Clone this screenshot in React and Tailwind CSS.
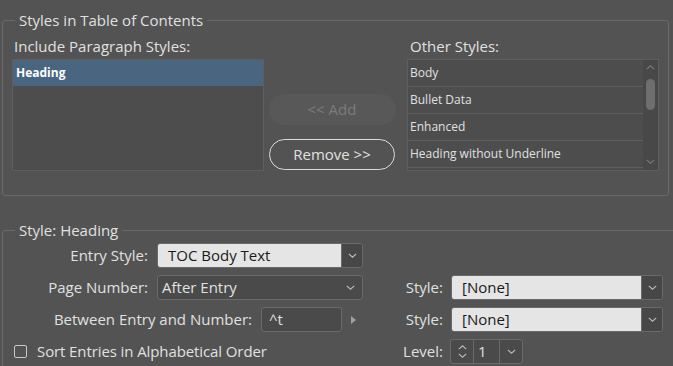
import React from "react";

const Chevron = ({ dir = "down", className = "" }) => (
  <svg width="9" height="5" viewBox="0 0 9 5" className={className}>
    {dir === "down" ? (
      <path d="M0.8 0.8 L4.5 4.2 L8.2 0.8" fill="none" stroke="currentColor" strokeWidth="1.1" />
    ) : (
      <path d="M0.8 4.2 L4.5 0.8 L8.2 4.2" fill="none" stroke="currentColor" strokeWidth="1.1" />
    )}
  </svg>
);

const LightSelect = ({ value, width }) => (
  <div className={`flex h-[25px] ${width} rounded-[3px] border border-[#6a6a6a] overflow-hidden`}>
    <div className="flex-1 bg-[#e5e5e5] text-[#1a1a1a] text-[15px] flex items-center pl-[10px]">{value}</div>
    <div className="w-[21px] bg-[#474747] border-l border-[#6a6a6a] flex items-center justify-center text-[#bdbdbd]">
      <Chevron />
    </div>
  </div>
);

const RightLabel = ({ children }) => (
  <div className="w-[51px] text-right text-[15px]">{children}</div>
);

export default function App() {
  const others = ["Body", "Bullet Data", "Enhanced", "Heading without Underline"];
  return (
    <div
      className="w-[673px] h-[366px] bg-[#535353] overflow-hidden text-[#e0e0e0] relative"
      style={{ fontFamily: '"Open Sans", "Noto Sans", sans-serif' }}
    >
      <fieldset className="ml-[2px] mt-[11px] w-[667px] h-[185px] border border-[#6a6a6a] rounded-[3px] px-[9px]">
        <legend className="ml-[3px] px-[4px] text-[15px] leading-[18px]">Styles in Table of Contents</legend>
        <div className="flex mt-[8px]">
          <div className="w-[252px] flex flex-col">
            <div className="text-[15px] leading-[18px] pl-[2px]">Include Paragraph Styles:</div>
            <div className="mt-[4px] h-[112px] border border-[#5e5e5e] bg-[#4d4d4d]">
              <div className="h-[26px] bg-[#4a6580] text-white text-[12px] font-bold flex items-center pl-[3px]">Heading</div>
            </div>
          </div>
          <div className="flex-1 flex flex-col items-center pt-[57px] pr-[7px]">
            <div className="w-[127px] h-[31px] rounded-full bg-[#585858] text-[#7c7c7c] text-[15px] flex items-center justify-center">&lt;&lt; Add</div>
            <div className="mt-[14px] w-[126px] h-[31px] rounded-full border border-[#dcdcdc] text-[15px] flex items-center justify-center">Remove &gt;&gt;</div>
          </div>
          <div className="w-[252px] flex flex-col">
            <div className="text-[15px] leading-[18px] pl-[3px]">Other Styles:</div>
            <div className="mt-[4px] h-[112px] border border-[#5e5e5e] bg-[#4d4d4d] flex">
              <div className="flex-1 flex flex-col">
                {others.map((o) => (
                  <div key={o} className="h-[27px] border-b border-[#5e5e5e] text-[12px] flex items-center pl-[2px]">{o}</div>
                ))}
              </div>
              <div className="w-[15px] bg-[#484848] flex flex-col items-center text-[#7a7a7a]">
                <Chevron dir="up" className="mt-[5px]" />
                <div className="mt-[9px] w-[9px] h-[31px] rounded-full bg-[#6e6e6e]" />
                <div className="flex-1" />
                <Chevron className="mb-[6px]" />
              </div>
            </div>
          </div>
        </div>
      </fieldset>

      <fieldset className="ml-[2px] mt-[25px] w-[700px] h-[200px] border border-[#6a6a6a] rounded-[3px] px-[9px]">
        <legend className="ml-[3px] px-[4px] text-[15px] leading-[18px]">Style: Heading</legend>
        <div className="flex flex-col mt-[4px] gap-[7px]">
          <div className="flex items-center">
            <div className="w-[136px] text-right text-[15px]">Entry Style:</div>
            <div className="ml-[9px]"><LightSelect value="TOC Body Text" width="w-[206px]" /></div>
          </div>
          <div className="flex items-center">
            <div className="w-[380px] flex items-center">
              <div className="w-[136px] text-right text-[15px]">Page Number:</div>
              <div className="ml-[9px] w-[206px] h-[25px] rounded-[3px] border border-[#6a6a6a] bg-[#4a4a4a] flex items-center pl-[4px] pr-[7px] text-[15px]">
                <span className="flex-1">After Entry</span>
                <Chevron className="text-[#bdbdbd]" />
              </div>
            </div>
            <RightLabel>Style:</RightLabel>
            <div className="ml-[8px]"><LightSelect value="[None]" width="w-[212px]" /></div>
          </div>
          <div className="flex items-center">
            <div className="w-[380px] flex items-center">
              <div className="w-[240px] text-right text-[15px]">Between Entry and Number:</div>
              <div className="ml-[9px] w-[81px] h-[25px] rounded-[3px] border border-[#6a6a6a] bg-[#4a4a4a] flex items-center pl-[7px] text-[15px]">^t</div>
              <svg width="5" height="8" viewBox="0 0 5 8" className="ml-[9px]"><path d="M0 0 L5 4 L0 8 Z" fill="#a0a0a0" /></svg>
            </div>
            <RightLabel>Style:</RightLabel>
            <div className="ml-[8px]"><LightSelect value="[None]" width="w-[212px]" /></div>
          </div>
          <div className="flex items-center">
            <div className="w-[380px] flex items-center">
              <div className="w-[13px] h-[13px] border border-[#c8c8c8] rounded-[2px] ml-[2px]" />
              <div className="ml-[10px] text-[15px] tracking-[-0.1px]">Sort Entries in Alphabetical Order</div>
            </div>
            <RightLabel>Level:</RightLabel>
            <div className="ml-[7px] h-[25px] flex rounded-[3px] border border-[#6a6a6a] bg-[#4a4a4a]">
              <div className="w-[23px] flex flex-col items-center justify-center gap-[3px] text-[#bdbdbd] border-r border-[#6a6a6a]">
                <Chevron dir="up" />
                <Chevron />
              </div>
              <div className="w-[26px] text-[15px] flex items-center pl-[4px] border-r border-[#6a6a6a]">1</div>
              <div className="w-[22px] flex items-center justify-center text-[#bdbdbd]"><Chevron /></div>
            </div>
          </div>
        </div>
      </fieldset>
    </div>
  );
}
